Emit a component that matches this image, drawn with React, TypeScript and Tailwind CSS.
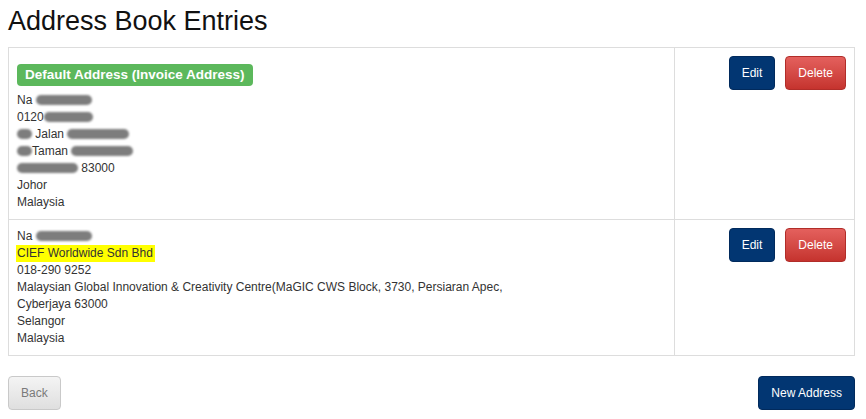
import React from "react";

const Blob = ({ w, ml = 0 }: { w: number; ml?: number }) => (
  <span
    className="inline-block h-[10px] rounded-full bg-[#7d7d7d] align-[-1px] blur-[0.8px]"
    style={{ width: w, marginLeft: ml }}
  />
);

const BtnEdit = () => (
  <button className="h-[34px] px-[12px] rounded-[4px] border border-[#012a5c] bg-[#023672] text-white text-[12px] leading-[17px]">
    Edit
  </button>
);

const BtnDelete = () => (
  <button className="h-[34px] px-[12px] rounded-[4px] border border-[#b12d29] bg-gradient-to-b from-[#e4605d] to-[#c5332e] text-white text-[12px] leading-[17px]">
    Delete
  </button>
);

export default function App() {
  return (
    <div
      className="bg-white min-h-[419px] pl-2 pr-[11px] text-[#333] text-[12px] leading-[17px]"
      style={{ fontFamily: '"Liberation Sans", Arial, sans-serif' }}
    >
      <h1 className="pt-[6px] text-[27px] leading-[31px] font-normal text-[#111]">
        Address Book Entries
      </h1>
      <div className="mt-[10px] border border-[#ddd]">
        {/* Row 1 */}
        <div className="flex">
          <div className="w-[666px] border-r border-[#ddd] p-2">
            <div className="mt-2 mb-[6px] flex">
              <span className="h-[22px] px-[8px] flex items-center rounded-[4px] bg-[#5cb85c] text-white font-bold text-[13.5px] leading-none">
                Default Address (Invoice Address)
              </span>
            </div>
            <div>
              Na <Blob w={56} />
            </div>
            <div>
              0120
              <Blob w={49} />
            </div>
            <div>
              <Blob w={15} /> Jalan <Blob w={62} />
            </div>
            <div>
              <Blob w={15} />
              Taman <Blob w={62} />
            </div>
            <div>
              <Blob w={61} /> 83000
            </div>
            <div>Johor</div>
            <div>Malaysia</div>
          </div>
          <div className="flex-1 p-2 flex justify-end items-start gap-[10px]">
            <BtnEdit />
            <BtnDelete />
          </div>
        </div>
        {/* Row 2 */}
        <div className="flex border-t border-[#ddd]">
          <div className="w-[666px] border-r border-[#ddd] p-2">
            <div>
              Na <Blob w={56} />
            </div>
            <div>
              <span className="inline-block bg-[#ffff00] -ml-[1px] pl-[1px] pr-[2px] leading-[17px]">
                CIEF Worldwide Sdn Bhd
              </span>
            </div>
            <div>018-290 9252</div>
            <div>
              Malaysian Global Innovation &amp; Creativity Centre(MaGIC CWS Block, 3730, Persiaran Apec,
            </div>
            <div>Cyberjaya 63000</div>
            <div>Selangor</div>
            <div>Malaysia</div>
          </div>
          <div className="flex-1 p-2 flex justify-end items-start gap-[10px]">
            <BtnEdit />
            <BtnDelete />
          </div>
        </div>
      </div>
      <div className="mt-[20px] flex justify-between">
        <button className="h-[34px] px-[12px] rounded-[4px] border border-[#c9c9c9] bg-gradient-to-b from-[#f4f4f4] to-[#dfdfdf] text-[#7a7a7a] text-[12px] leading-[17px]">
          Back
        </button>
        <button className="h-[34px] px-[12px] rounded-[4px] border border-[#012a5c] bg-[#023672] text-white text-[12px] leading-[17px]">
          New Address
        </button>
      </div>
    </div>
  );
}
